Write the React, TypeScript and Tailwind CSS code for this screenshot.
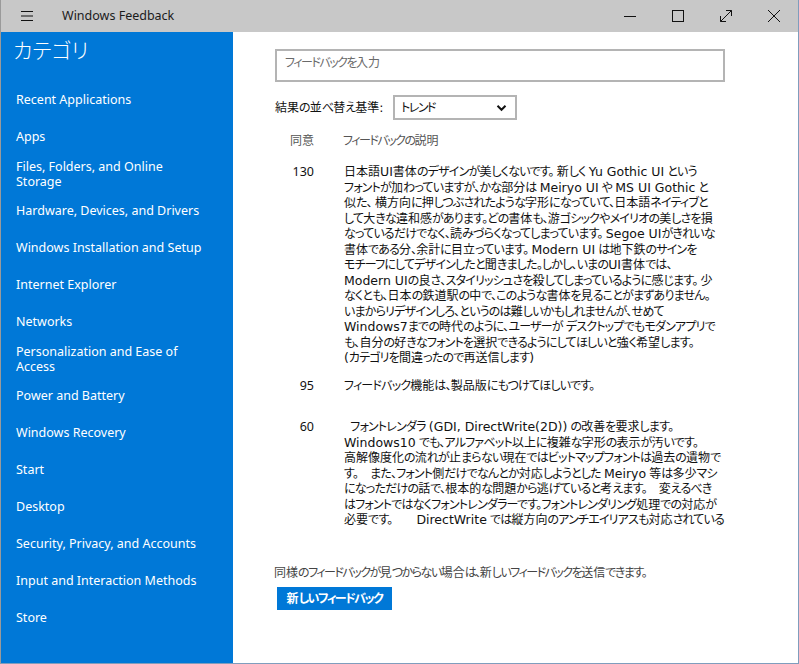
import React from 'react';

const categories = [
  'Recent Applications',
  'Apps',
  'Files, Folders, and Online\nStorage',
  'Hardware, Devices, and Drivers',
  'Windows Installation and Setup',
  'Internet Explorer',
  'Networks',
  'Personalization and Ease of\nAccess',
  'Power and Battery',
  'Windows Recovery',
  'Start',
  'Desktop',
  'Security, Privacy, and Accounts',
  'Input and Interaction Methods',
  'Store',
];

const feedback = [
  {
    votes: '130',
    lines: [
      '日本語UI書体のデザインが美しくないです。 新しく Yu Gothic UI という',
      'フォントが加わっていますが、かな部分は Meiryo UI や MS UI Gothic と',
      '似た、 横方向に押しつぶされたような字形になっていて、日本語ネイティブと',
      'して大きな違和感があります。どの書体も、游ゴシックやメイリオの美しさを損',
      'なっているだけでなく、読みづらくなってしまっています。 Segoe UIがきれいな',
      '書体である分、余計に目立っています。 Modern UI は地下鉄のサインを',
      'モチーフにしてデザインしたと聞きました。しかし、いまのUI書体では、',
      'Modern UIの良さ、スタイリッシュさを殺してしまっているように感じます。 少',
      'なくとも、日本の鉄道駅の中で、このような書体を見ることがまずありません。',
      'いまからリデザインしろ、というのは難しいかもしれませんが、せめて',
      'Windows7までの時代のように、ユーザーが デスクトップでもモダンアプリで',
      'も、自分の好きなフォントを選択できるようにしてほしいと強く希望します。',
      '(カテゴリを間違ったので再送信します)',
    ],
    gap: 'mt-0',
  },
  {
    votes: '95',
    lines: ['フィードバック機能は、製品版にもつけてほしいです。'],
    gap: 'mt-[12px]',
  },
  {
    votes: '60',
    lines: [
      '  フォントレンダラ (GDI, DirectWrite(2D)) の改善を要求します。',
      'Windows10 でも、アルファベット以上に複雑な字形の表示が汚いです。',
      '高解像度化の流れが止まらない現在ではビットマップフォントは過去の遺物で',
      'す。　また、フォント側だけでなんとか対応しようとした Meiryo 等は多少マシ',
      'になっただけの話で、根本的な問題から逃げていると考えます。　変えるべき',
      'はフォントではなくフォントレンダラーです。フォントレンダリング処理での対応が',
      '必要です。　　DirectWrite では縦方向のアンチエイリアスも対応されている',
    ],
    gap: 'mt-[26px]',
  },
];

const TOKEN = /([\u0021-\u007e](?:[\u0020-\u007e]*[\u0021-\u007e])?)|([\u3040-\u30ff\u3001\u3002]+)|([^\u0021-\u007e\u3040-\u30ff\u3001\u3002]+)/g;

// Meiryo UI has narrow kana and wide latin, so split the runs
const Jp = ({ text, tight }: { text: string; tight?: boolean }) => {
  const out: React.ReactNode[] = [];
  let m: RegExpExecArray | null;
  let i = 0;
  TOKEN.lastIndex = 0;
  while ((m = TOKEN.exec(text))) {
    if (m[1]) {
      out.push(
        <span key={i++} className="font-['DejaVu_Sans',sans-serif] text-[12.5px]">
          {m[1]}
        </span>
      );
    } else if (m[2]) {
      out.push(
        <span key={i++} className={tight ? 'tracking-[-1.5px]' : 'tracking-[-0.8px]'}>
          {m[2]}
        </span>
      );
    } else {
      out.push(<span key={i++}>{m[3]}</span>);
    }
  }
  return <>{out}</>;
};

const TitleBar = () => (
  <div className="h-[32px] bg-[#c8c8c8] flex items-center shrink-0">
    <div className="w-[50px] h-full flex items-center justify-center">
      <svg width="14" height="12" viewBox="0 0 14 12" className="ml-[1px]">
        <path d="M1 1.5h12M1 6h12M1 10.5h12" stroke="#111" strokeWidth="1.2" />
      </svg>
    </div>
    <span className="ml-[11px] text-[12.5px] text-[#1b1b1b]">Windows Feedback</span>
    <div className="ml-auto flex h-full">
      <div className="w-[48px] flex items-center justify-center">
        <svg width="14" height="14" viewBox="0 0 14 14">
          <path d="M1 7.5h12" stroke="#111" strokeWidth="1" />
        </svg>
      </div>
      <div className="w-[48px] flex items-center justify-center">
        <svg width="14" height="14" viewBox="0 0 14 14">
          <rect x="1.5" y="1.5" width="11" height="11" fill="none" stroke="#111" strokeWidth="1" />
        </svg>
      </div>
      <div className="w-[48px] flex items-center justify-center">
        <svg width="14" height="14" viewBox="0 0 14 14">
          <path d="M1.5 12.5L12.5 1.5M7 1.5h5.5V7M1.5 7v5.5H7" fill="none" stroke="#111" strokeWidth="1" />
        </svg>
      </div>
      <div className="w-[48px] flex items-center justify-center">
        <svg width="14" height="14" viewBox="0 0 14 14">
          <path d="M1 1l12 12M13 1L1 13" stroke="#111" strokeWidth="1" />
        </svg>
      </div>
    </div>
  </div>
);

const Sidebar = () => (
  <aside className="w-[232px] bg-[#0078d7] text-white flex flex-col shrink-0">
    <div className="h-[36px] pt-[4px] pl-[12px] text-[21px] leading-[28px] font-light [font-feature-settings:'palt']">
      カテゴリ
    </div>
    <nav className="mt-[13px] flex flex-col">
      {categories.map((c) => (
        <div key={c} className="h-[37px] flex items-center pl-[15px] text-[12.5px] leading-[15px] whitespace-pre">
          {c}
        </div>
      ))}
    </nav>
  </aside>
);

export default function App() {
  return (
    <div className="w-[799px] h-[664px] flex flex-col border-l border-r border-b border-l-[#9a9a9a] border-r-[#7f9dbd] border-b-[#7f9dbd] bg-white font-['Noto_Sans','Noto_Sans_CJK_JP',sans-serif] overflow-hidden">
      <TitleBar />
      <div className="flex flex-1 min-h-0">
        <Sidebar />
        <main className="flex-1 pl-[42px] pt-[17px] text-[12px] text-[#111] [font-feature-settings:'palt']">
          <div className="w-[450px] h-[33px] border-2 border-[#b4b4b4] px-[8px] pt-[4px] leading-[16px] text-[#6a6a6a]">
            <Jp text="フィードバックを入力" tight />
          </div>

          <div className="mt-[13px] flex items-center">
            <span className="w-[118px] leading-[16px]">
              <Jp text="結果の並べ替え基準:" />
            </span>
            <div className="w-[124px] h-[25px] border-2 border-[#b4b4b4] flex items-center pl-[6px] pr-[8px]">
              <Jp text="トレンド" tight />
              <svg width="11" height="8" viewBox="0 0 11 8" className="ml-auto">
                <path d="M1.5 1.8l4 4 4-4" fill="none" stroke="#111" strokeWidth="2" />
              </svg>
            </div>
          </div>

          <div className="mt-[13px] flex leading-[16px] text-[#555]">
            <span className="w-[39px] text-right">同意</span>
            <span className="ml-[29px]">
              <Jp text="フィードバックの説明" tight />
            </span>
          </div>

          <div className="mt-[12px] pt-[3px] h-[374px] overflow-hidden">
            {feedback.map((f) => (
              <div key={f.votes} className={`flex leading-[15.5px] ${f.gap}`}>
                <div className="w-[39px] text-right text-[12.5px]">{f.votes}</div>
                <div className="ml-[30px] flex flex-col">
                  {f.lines.map((l, i) => (
                    <div key={i} className="whitespace-pre">
                      <Jp text={l} />
                    </div>
                  ))}
                </div>
              </div>
            ))}
          </div>

          <div className="mt-[30px] -ml-[1px] leading-[16px] text-[#444]">
            <Jp text="同様のフィードバックが見つからない場合は、新しいフィードバックを送信できます。" tight />
          </div>
          <button className="mt-[6px] ml-[2px] w-[115px] h-[23px] bg-[#0078d7] text-white font-bold text-[12px] flex items-center justify-center">
            <Jp text="新しいフィードバック" tight />
          </button>
        </main>
      </div>
    </div>
  );
}
